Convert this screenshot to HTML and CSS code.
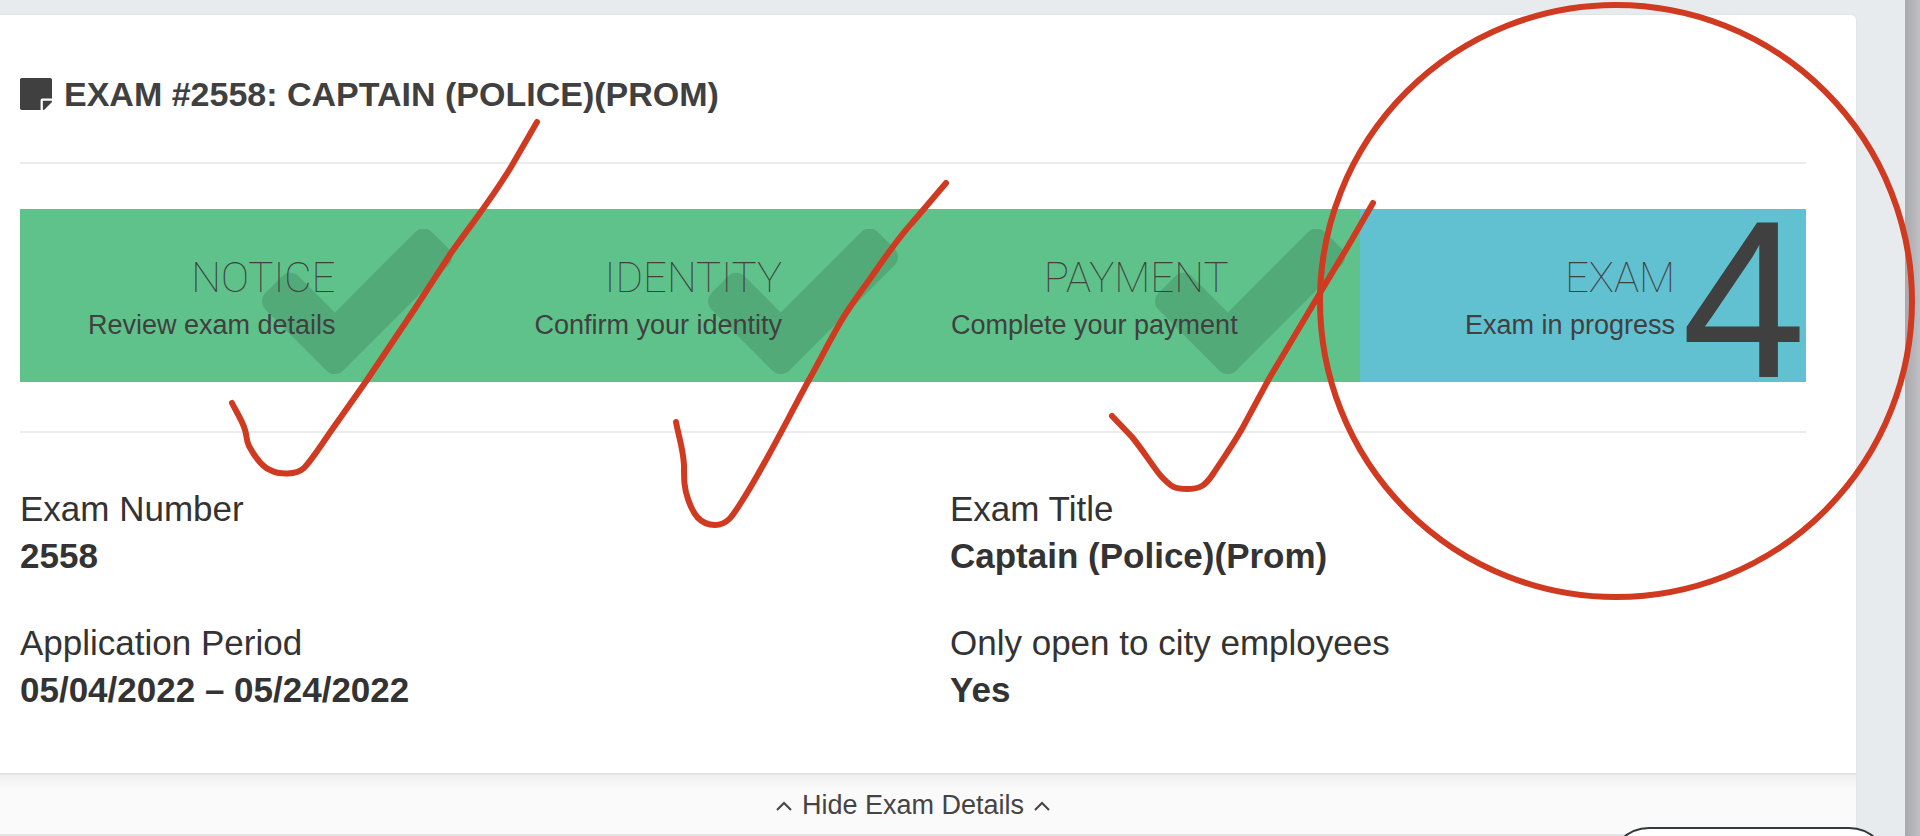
FILE: index.html
```html
<!DOCTYPE html>
<html lang="en">
<head>
    <meta charset="utf-8">
    <title>Exam #2558</title>
    <link rel="stylesheet" href="styles.css">
</head>
<body>
    <main class="page">
        <section class="card">
            <div class="card-body">
                <h1 class="title">
                    <svg class="title-icon" viewBox="0 32 448 448" aria-hidden="true"><path d="M312 320h136V56c0-13.300-10.700-24-24-24H24C10.700 32 0 42.700 0 56v400c0 13.300 10.700 24 24 24h264V344c0-13.200 10.800-24 24-24zm129 55l-98 98c-4.500 4.500-10.600 7-17 7h-6V352h128v6.100c0 6.300-2.500 12.400-7 16.900z"/></svg>
                    EXAM #2558: CAPTAIN (POLICE)(PROM)
                </h1>
                <hr>
                <ol class="steps">
                    <li class="step">
                        <svg class="step-check" viewBox="121 346 1550 1176" aria-hidden="true"><path d="M1671 566q0 40-28 68l-724 724-136 136q-28 28-68 28t-68-28l-136-136-362-362q-28-28-28-68t28-68l136-136q28-28 68-28t68 28l294 295 656-657q28-28 68-28t68 28l136 136q28 28 28 68z"/></svg>
                        <div class="step-text">
                            <div class="step-name">NOTICE</div>
                            <div class="step-info">Review exam details</div>
                        </div>
                    </li>
                    <li class="step">
                        <svg class="step-check" viewBox="121 346 1550 1176" aria-hidden="true"><path d="M1671 566q0 40-28 68l-724 724-136 136q-28 28-68 28t-68-28l-136-136-362-362q-28-28-28-68t28-68l136-136q28-28 68-28t68 28l294 295 656-657q28-28 68-28t68 28l136 136q28 28 28 68z"/></svg>
                        <div class="step-text">
                            <div class="step-name">IDENTITY</div>
                            <div class="step-info">Confirm your identity</div>
                        </div>
                    </li>
                    <li class="step">
                        <svg class="step-check" viewBox="121 346 1550 1176" aria-hidden="true"><path d="M1671 566q0 40-28 68l-724 724-136 136q-28 28-68 28t-68-28l-136-136-362-362q-28-28-28-68t28-68l136-136q28-28 68-28t68 28l294 295 656-657q28-28 68-28t68 28l136 136q28 28 28 68z"/></svg>
                        <div class="step-text">
                            <div class="step-name">PAYMENT</div>
                            <div class="step-info">Complete your payment</div>
                        </div>
                    </li>
                    <li class="step current">
                        <div class="step-number">4</div>
                        <div class="step-text">
                            <div class="step-name">EXAM</div>
                            <div class="step-info">Exam in progress</div>
                        </div>
                    </li>
                </ol>
                <hr>
                <dl class="details">
                    <div>
                        <dt>Exam Number</dt>
                        <dd>2558</dd>
                    </div>
                    <div>
                        <dt>Exam Title</dt>
                        <dd>Captain (Police)(Prom)</dd>
                    </div>
                    <div>
                        <dt>Application Period</dt>
                        <dd>05/04/2022 – 05/24/2022</dd>
                    </div>
                    <div>
                        <dt>Only open to city employees</dt>
                        <dd>Yes</dd>
                    </div>
                </dl>
            </div>
            <button class="toggle" type="button">
                <svg class="chevron" viewBox="0 0 16 10" aria-hidden="true"><path d="M1 9l7-7 7 7"/></svg>
                Hide Exam Details
                <svg class="chevron" viewBox="0 0 16 10" aria-hidden="true"><path d="M1 9l7-7 7 7"/></svg>
            </button>
        </section>
    </main>

    <button class="help" type="button" aria-label="Help"></button>

    <!-- red pen marks over the page -->
    <svg class="marks" viewBox="0 0 1920 836" aria-hidden="true">
        <path d="M232 403C237 413 243 422 245 430C247 436 246 440 249 446C256 459 263 467 270 470C280 475 296 475 304 468C311 461 320 447 331 431L367 380L414 310L451 253C470 226 491 200 511 167L537 122"/>
        <path d="M676 422C679 438 683 448 684 465C684 480 684 488 688 499C693 514 700 525 715 525C727 525 732 517 742 501C764 467 788 418 810 378C820 360 829 342 840 323C848 309 857 297 867 283C884 259 898 238 912 223L946 183"/>
        <path d="M1112 416L1132 437C1142 449 1152 465 1160 475C1172 488 1175 489 1187 489C1200 489 1205 486 1213 474C1222 460 1233 445 1243 427L1270 377L1320 293L1347 248L1373 203"/>
        <ellipse cx="1616" cy="301" rx="296" ry="296"/>
    </svg>
</body>
</html>
```
FILE: styles.css
```css
body {
    margin: 0;
    min-height: 100vh;
    overflow: hidden;
    font-family: "Liberation Sans", Arial, sans-serif;
    color: #333;
    background: linear-gradient(to left, #c0c0c4, #a9a9ad 15px);
}
.page {
    min-height: 100vh;
    margin-right: 15px;
    padding: 15px 49px 0 0;
    box-sizing: border-box;
    background-color: #e7ebee;
}
/* the card runs off the left side of the window */
.card {
    margin-left: -30px;
    background-color: #fff;
    border-radius: 0 5px 0 0;
    box-shadow: 0 0 2px rgba(0, 0, 0, 0.1);
}
.card-body {
    padding: 55px 50px 60px;
}
.title {
    display: flex;
    align-items: center;
    gap: 12px;
    margin: 0 0 44px;
    font-size: 34px;
    line-height: 48px;
    color: #404040;
}
.title-icon {
    width: 32px;
    height: 32px;
    fill: #404040;
}
hr {
    height: 2px;
    margin: 0 0 45px;
    border: 0;
    background-color: #ececec;
}

/* Progress steps */
.steps {
    display: grid;
    grid-template-columns: repeat(4, 1fr);
    margin: 0 0 49px;
    padding: 0;
    list-style: none;
}
.step {
    position: relative;
    min-width: 0;
    height: 173px;
    background-color: #5fc28a;
}
.step.current {
    background-color: #62c1d0;
}
.step-text {
    position: relative;
    padding: 40px 131px 0 38px;
    text-align: right;
    white-space: nowrap;
    color: #404040;
}
.step-name {
    font-family: Roboto, "Liberation Sans", sans-serif;
    font-size: 42px;
    font-weight: 100;
    line-height: 58px;
}
.step-info {
    font-size: 27px;
    line-height: 37px;
}
.step-check {
    position: absolute;
    top: 20px;
    right: 15px;
    width: 190px;
    height: 146px;
    fill: rgba(0, 0, 0, 0.12);
}
.step-number {
    position: absolute;
    top: 0;
    right: 0;
    font-size: 224px;
    line-height: 180px;
    color: #404040;
}

/* Exam details */
.details {
    display: grid;
    grid-template-columns: 1fr 1fr;
    gap: 40px 74px;
    margin: 52px 0 0;
    font-size: 35px;
    line-height: 47px;
}
.details dd {
    margin: 0;
    font-weight: bold;
}
.toggle {
    display: flex;
    justify-content: center;
    align-items: center;
    gap: 10px;
    width: 100%;
    height: 63px;
    padding: 2px 0 0;
    border: solid #e3e3e3;
    border-width: 2px 0;
    background: linear-gradient(#f0f0f0, #fafafa 14px);
    font-family: inherit;
    font-size: 27px;
    color: #444;
    cursor: pointer;
}
.chevron {
    width: 16px;
    height: 10px;
    fill: none;
    stroke: #444;
    stroke-width: 2;
}

.help {
    position: fixed;
    right: 31px;
    bottom: -71px;
    width: 280px;
    height: 80px;
    border: 2px solid #333a3d;
    border-radius: 40px;
    background-color: #fff;
}
.marks {
    position: absolute;
    top: 0;
    left: 0;
    width: 100%;
    fill: none;
    stroke: #cf3a20;
    stroke-width: 6;
    stroke-linecap: round;
    stroke-linejoin: round;
    pointer-events: none;
}
```
